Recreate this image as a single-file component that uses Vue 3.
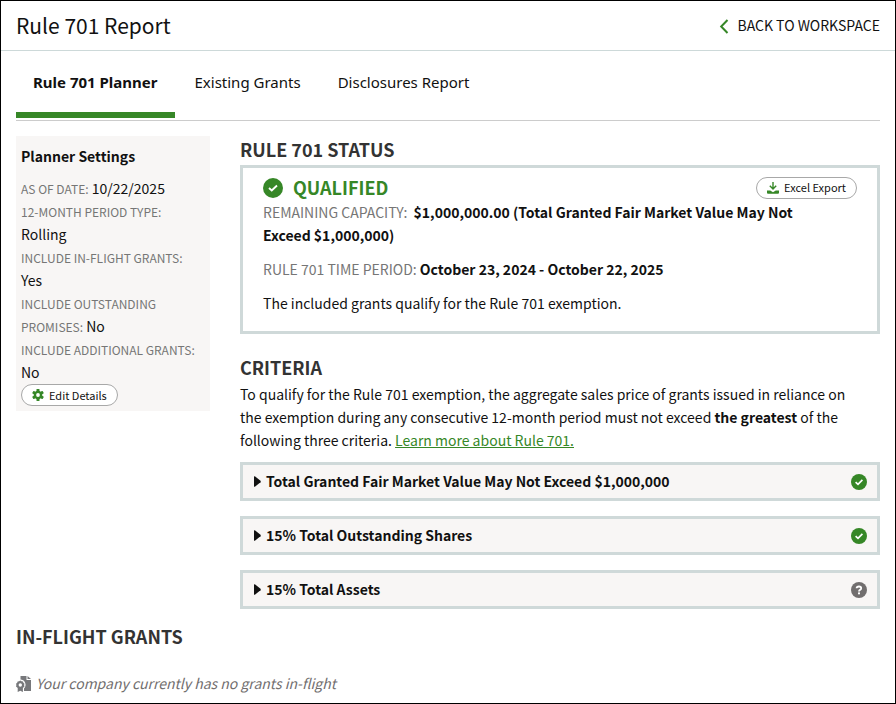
<script setup>
import { ref } from 'vue'

const tabs = ['Rule 701 Planner', 'Existing Grants', 'Disclosures Report']
const activeTab = ref(0)

const settings = [
  { label: 'AS OF DATE:', value: '10/22/2025' },
  { label: '12-MONTH PERIOD TYPE:', value: 'Rolling' },
  { label: 'INCLUDE IN-FLIGHT GRANTS:', value: 'Yes' },
  { label: 'INCLUDE OUTSTANDING PROMISES:', value: 'No' },
  { label: 'INCLUDE ADDITIONAL GRANTS:', value: 'No' },
]

const criteria = [
  { title: 'Total Granted Fair Market Value May Not Exceed $1,000,000', met: true },
  { title: '15% Total Outstanding Shares', met: true },
  { title: '15% Total Assets', met: false },
]
</script>

<template>
  <div class="page">
    <header class="page-header">
      <h1>Rule 701 Report</h1>
      <a href="#" class="back">
        <svg width="10" height="16" viewBox="0 0 10 16" aria-hidden="true"><path d="M8.5 2 2.200 8.500l6.300 6.500" fill="none" stroke="#368727" stroke-width="2" /></svg>
        BACK TO WORKSPACE
      </a>
    </header>

    <nav class="tabs" role="tablist">
      <button
        v-for="(tab, i) in tabs"
        :key="tab"
        type="button"
        role="tab"
        :aria-selected="activeTab === i"
        :class="{ active: activeTab === i }"
        @click="activeTab = i"
      >{{ tab }}</button>
    </nav>

    <div class="columns">
      <aside class="settings">
        <h3>Planner Settings</h3>
        <p v-for="s in settings" :key="s.label">
          <span class="label">{{ s.label }}</span> {{ s.value }}
        </p>
        <button type="button" class="pill">
          <svg width="12" height="12" viewBox="0 0 12 12" aria-hidden="true">
            <g fill="#368727">
              <rect x="4.500" y="0" width="3" height="12" rx="0.600" />
              <rect x="4.500" y="0" width="3" height="12" rx="0.600" transform="rotate(60 6 6)" />
              <rect x="4.500" y="0" width="3" height="12" rx="0.600" transform="rotate(120 6 6)" />
              <circle cx="6" cy="6" r="4.300" />
            </g>
            <circle cx="6" cy="6" r="1.900" fill="#fff" />
          </svg>
          Edit Details
        </button>
      </aside>

      <main>
        <h2>RULE 701 STATUS</h2>
        <section class="status">
          <div class="status-top">
            <svg width="20" height="20" viewBox="0 0 16 16" aria-hidden="true"><circle cx="8" cy="8" r="8" fill="#368727" /><path d="M4.800 8 7 10l4.200-4" fill="none" stroke="#fff" stroke-width="1.500" /></svg>
            <strong class="qualified">QUALIFIED</strong>
            <button type="button" class="pill">
              <svg width="12" height="12" viewBox="0 0 12 12" aria-hidden="true"><path d="M5.300 0h1.400v5.200l2-2 1 1L6 8 2.300 4.200l1-1 2 2zM0 8.500h3.200L6 10.200l2.800-1.700H12v2.300q0 .9-1 .9H1q-1 0-1-.9z" fill="#368727" /></svg>
              Excel Export
            </button>
          </div>
          <p><span class="label">REMAINING CAPACITY:</span>&nbsp; <strong>$1,000,000.00 (Total Granted Fair Market Value May Not Exceed $1,000,000)</strong></p>
          <p><span class="label">RULE 701 TIME PERIOD:</span> <strong>October 23, 2024 - October 22, 2025</strong></p>
          <p>The included grants qualify for the Rule 701 exemption.</p>
        </section>

        <h2>CRITERIA</h2>
        <p class="intro">
          To qualify for the Rule 701 exemption, the aggregate sales price of grants issued in reliance on the exemption during any consecutive 12-month period must not exceed <strong>the greatest</strong> of the following three criteria. <a href="#">Learn more about Rule 701.</a>
        </p>
        <div class="accordion">
          <button v-for="c in criteria" :key="c.title" type="button" aria-expanded="false">
            <svg width="7" height="11" viewBox="0 0 7 11" aria-hidden="true"><path d="M0 .8Q.1-.1.900.300L6.500 4.800Q7 5.500 6.500 6.200L.900 10.700Q.1 11.100 0 10.200z" fill="#111" /></svg>
            <span>{{ c.title }}</span>
            <svg v-if="c.met" width="16" height="16" viewBox="0 0 16 16" role="img" aria-label="Met"><circle cx="8" cy="8" r="8" fill="#368727" /><path d="M4.600 8.100 7 10.300l4.400-4.500" fill="none" stroke="#fff" stroke-width="1.700" /></svg>
            <svg v-else width="16" height="16" viewBox="0 0 16 16" role="img" aria-label="Unknown"><circle cx="8" cy="8" r="8" fill="#716e6e" /><path d="M5.600 6.300Q5.700 4.500 8 4.500q2.200 0 2.200 1.700 0 1.100-1.200 1.700-1 .5-1 1.500" fill="none" stroke="#fff" stroke-width="1.800" /><rect x="7" y="10.400" width="2" height="1.900" fill="#fff" /></svg>
          </button>
        </div>
      </main>
    </div>

    <section class="inflight">
      <h2>IN-FLIGHT GRANTS</h2>
      <p>
        <svg width="15" height="16" viewBox="0 0 15 16" aria-hidden="true">
          <path d="M4.500 0h6v4h4.500v11H4.500z" fill="#77787b" />
          <path d="M11.500 0 15 3h-3.500z" fill="#77787b" />
          <path d="M4.300 3.500a5.300 5.300 0 0 1 3.700 9V16H0V4z" fill="#fff" />
          <path d="m4.300 4.500 1.200.8 1.500.1.400 1.400 1.100.9-.4 1.400.4 1.400-1.100.900-.500.700V16l-2.600-1.300L1.700 16v-3.900l-.5-.700L0 10.500l.4-1.400L0 7.700l1.200-.9.400-1.400 1.500-.1z" fill="#77787b" />
          <circle cx="4.300" cy="9" r="1.700" fill="#fff" />
        </svg>
        <em>Your company currently has no grants in-flight</em>
      </p>
    </section>
  </div>
</template>

<style>
body {
  margin: 0;
}
</style>

<style scoped>
.page {
  box-sizing: border-box;
  min-height: 100vh;
  border: 1px solid #000;
  background: #fff;
  color: #111;
  font-family: "Noto Sans CJK SC", "Open Sans", sans-serif;
  font-size: 14px;
  line-height: 23px;
}
h1, h2, h3, p {
  margin: 0;
}
button {
  font: inherit;
  color: inherit;
  cursor: pointer;
}
.label {
  color: #767676;
}
.page-header {
  display: flex;
  justify-content: space-between;
  align-items: center;
  height: 49px;
  padding: 0 15px;
  border-bottom: 1px solid #cdd9d9;
}
h1 {
  font-size: 21px;
  font-weight: 400;
}
.back {
  display: flex;
  align-items: center;
  gap: 8px;
  color: #111;
  text-decoration: none;
}
.tabs {
  display: flex;
  gap: 3px;
  margin: 0 15px;
  padding-bottom: 2px;
  border-bottom: 1px solid #ccc;
  font-family: "Noto Sans", sans-serif;
  font-size: 15px;
}
.tabs button {
  height: 67px;
  padding: 2px 17px 0;
  border: 0;
  border-bottom: 6px solid transparent;
  background: none;
}
.tabs .active {
  border-color: #368727;
  font-weight: 700;
}
.columns {
  display: grid;
  grid-template-columns: 194px minmax(0, 1fr);
  gap: 30px;
  align-items: start;
  margin: 15px 15px 0;
}
.settings {
  padding: 9px 5px 4px;
  background: #f8f6f5;
}
h3 {
  margin-bottom: 9px;
  font-size: 14px;
  font-weight: 700;
}
.settings .label {
  font-size: 12px;
}
.pill {
  display: inline-flex;
  align-items: center;
  gap: 5px;
  height: 22px;
  padding: 0 10px;
  border: 1px solid #a8a8a8;
  border-radius: 11px;
  background: #fff;
  font-size: 11px;
}
h2 {
  padding-bottom: 2px;
  color: #333;
  font-size: 18px;
  font-weight: 700;
  line-height: 27px;
}
.status {
  margin-bottom: 20px;
  padding: 8px 20px 16px;
  border: 3px solid #cfd9d9;
}
.status p {
  padding-right: 20px;
}
.status p + p {
  margin-top: 11px;
}
.status-top {
  display: flex;
  align-items: center;
  margin-bottom: 2px;
}
.qualified {
  margin-left: 10px;
  color: #368727;
  font-size: 18px;
}
.status-top .pill {
  margin-left: auto;
}
.intro {
  padding-right: 16px;
}
.intro a {
  color: #368727;
}
.accordion {
  display: grid;
  gap: 15px;
  margin-top: 10px;
}
.accordion button {
  display: flex;
  align-items: center;
  height: 39px;
  padding: 0 10px 0 11px;
  border: 3px solid #cfd9d9;
  background: #f8f6f5;
  font-weight: 700;
}
.accordion span {
  flex: 1;
  margin-left: 5px;
  text-align: left;
}
.inflight {
  margin: 14px 15px 0;
}
.inflight p {
  display: flex;
  align-items: center;
  gap: 5px;
  margin-top: 20px;
  color: #716e6e;
}
</style>
